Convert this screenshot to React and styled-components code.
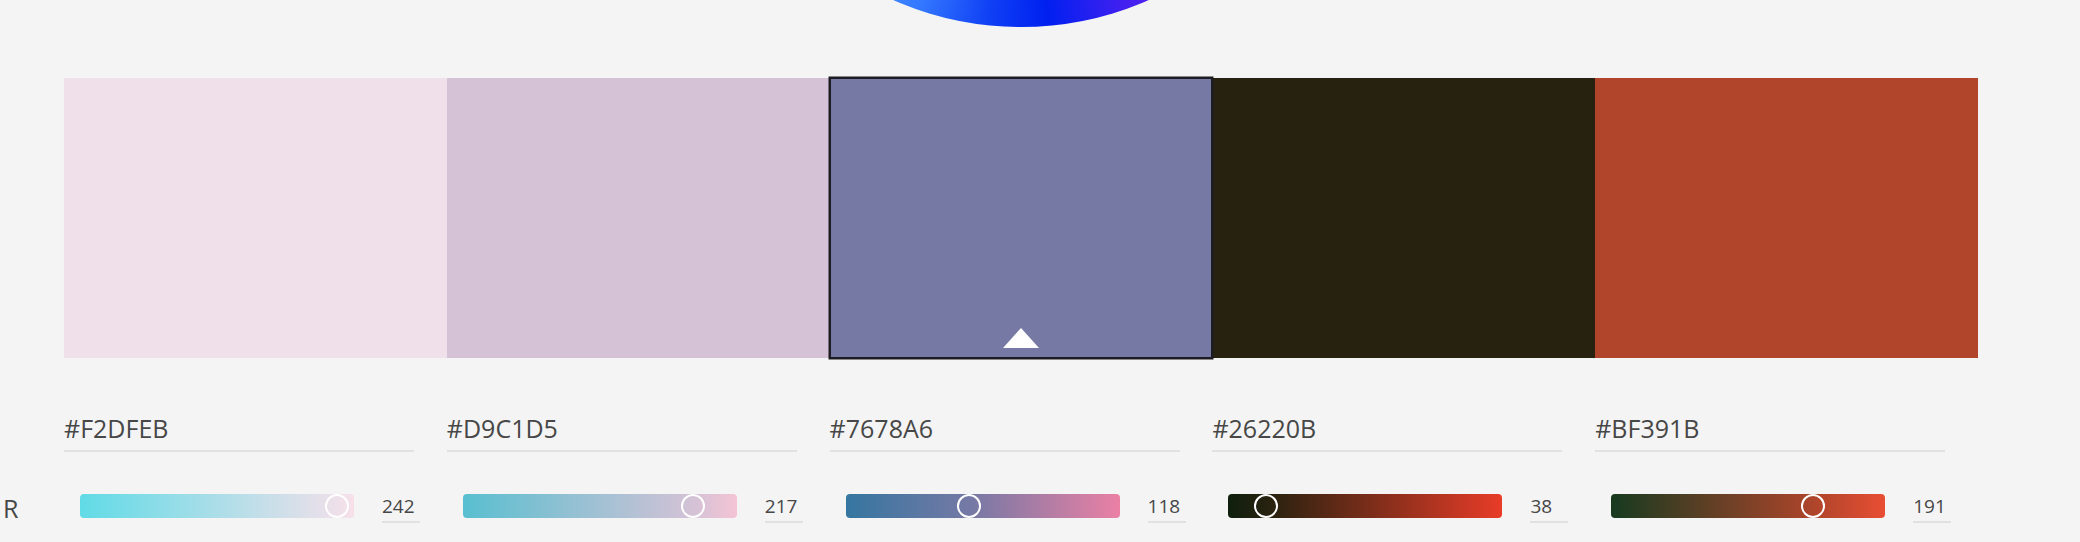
import React from "react";
import styled, { createGlobalStyle } from "styled-components";

const Global = createGlobalStyle`
  html, body { margin: 0; padding: 0; background: #f4f4f4; }
  body { font-family: "Open Sans", "Noto Sans", sans-serif; color: #4a4a4a; }
`;

const Page = styled.div`
  width: 2080px;
  height: 542px;
  overflow: hidden;
  background: #f4f4f4;
`;

const WheelArea = styled.div`
  height: 78px;
  overflow: hidden;
`;

const Wheel = styled.div`
  width: 632px;
  height: 632px;
  margin-left: 705px;
  margin-top: -605px;
  border-radius: 50%;
  background: conic-gradient(
    from 0deg,
    #7a2af0 0deg,
    #6a22f0 140deg,
    #5a20f0 152deg,
    #4020f0 161deg,
    #0020f0 175deg,
    #1040f5 186deg,
    #3478ff 199deg,
    #4a95ff 212deg,
    #60b0ff 230deg,
    #7a2af0 360deg
  );
`;

const Strip = styled.div`
  display: flex;
  margin-left: 64px;
  width: 1914px;
  height: 280px;
`;

const Swatch = styled.div`
  flex: 1;
  position: relative;
  z-index: ${(p) => (p.$selected ? 1 : 0)};
  display: flex;
  align-items: flex-end;
  justify-content: center;
  padding-bottom: 10px;
  box-sizing: border-box;
  background: ${(p) => p.$color};
  box-shadow: ${(p) =>
    p.$selected ? "inset 0 0 0 1px #1c1c22, 0 0 0 1.5px #1c1c22" : "none"};
`;

const Caret = styled.div`
  width: 0;
  height: 0;
  border-left: 18px solid transparent;
  border-right: 18px solid transparent;
  border-bottom: 20px solid #ffffff;
`;

const Row = styled.div`
  display: grid;
  grid-template-columns: 64px repeat(5, 1fr);
  width: 1978px;
  margin-top: ${(p) => p.$top}px;
`;

const HexField = styled.div`
  width: 350px;
  font-size: 25px;
  line-height: 25px;
  padding-bottom: 9px;
  border-bottom: 2px solid #e1e1e1;
  color: #474747;
`;

const ChannelLabel = styled.div`
  font-size: 25px;
  line-height: 25px;
  margin-top: 2px;
  padding-left: 3px;
  color: #474747;
`;

const ChannelCell = styled.div`
  display: flex;
  align-items: flex-start;
  padding-left: 16px;
  gap: 28px;
`;

const Track = styled.div`
  position: relative;
  width: 274px;
  height: 24px;
  border-radius: 4px;
  background: ${(p) => p.$gradient};
`;

const Thumb = styled.div`
  position: absolute;
  top: 0;
  width: 24px;
  height: 24px;
  box-sizing: border-box;
  border-radius: 50%;
  border: 2.5px solid #ffffff;
`;

const Value = styled.div`
  width: 38px;
  margin-top: 3px;
  font-size: 19px;
  line-height: 19px;
  padding-bottom: 5px;
  border-bottom: 2px solid #e1e1e1;
  color: #474747;
`;

const colors = [
  { hex: "#F2DFEB", shown: "#efe0ea", r: 242, left: "#60dbe6", right: "#f7dfe9" },
  { hex: "#D9C1D5", shown: "#d6c2d6", r: 217, left: "#58bfd0", right: "#f4c4d4" },
  { hex: "#7678A6", shown: "#7779a5", r: 118, left: "#3576a0", right: "#eb80a4", selected: true },
  { hex: "#26220B", shown: "#27220f", r: 38, left: "#0f1f0d", right: "#e83c28" },
  { hex: "#BF391B", shown: "#b0452b", r: 191, left: "#163a1f", right: "#e84e33" },
];

export default function App() {
  return (
    <Page>
      <Global />
      <WheelArea>
        <Wheel />
      </WheelArea>
      <Strip>
        {colors.map((c) => (
          <Swatch key={c.hex} $color={c.shown} $selected={c.selected}>
            {c.selected && <Caret />}
          </Swatch>
        ))}
      </Strip>
      <Row $top={58}>
        <div />
        {colors.map((c) => (
          <div key={c.hex}>
            <HexField>{c.hex}</HexField>
          </div>
        ))}
      </Row>
      <Row $top={42}>
        <ChannelLabel>R</ChannelLabel>
        {colors.map((c) => {
          const frac = c.r / 255;
          const pct = (frac * 100).toFixed(1);
          const center = frac * 274 - 3;
          return (
            <ChannelCell key={c.hex}>
              <Track
                $gradient={`linear-gradient(to right, ${c.left} 0%, ${c.shown} ${pct}%, ${c.right} 100%)`}
              >
                <Thumb style={{ left: `${center - 12}px` }} />
              </Track>
              <Value>{c.r}</Value>
            </ChannelCell>
          );
        })}
      </Row>
    </Page>
  );
}
